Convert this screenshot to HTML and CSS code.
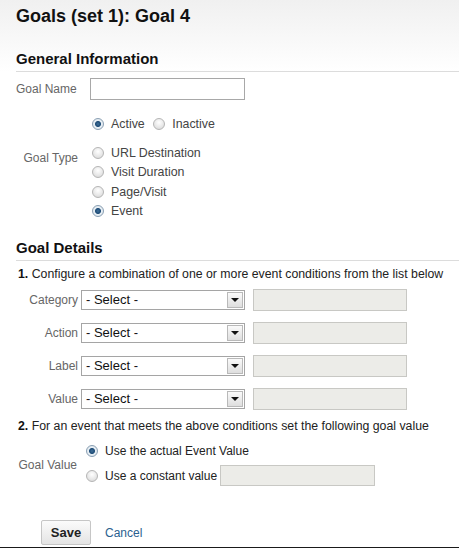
FILE: index.html
```html
<!DOCTYPE html>
<html>
<head>
<meta charset="utf-8">
<link rel="stylesheet" href="styles.css">
</head>
<body>
<div class="page">
  <h1 class="title">Goals (set 1): Goal 4</h1>
  <h2 class="section">General Information</h2>
  <div class="form">
    <div class="row name-row">
      <div class="label">Goal Name</div>
      <div class="field"><span class="textbox"></span></div>
    </div>
    <div class="row status-row">
      <div class="label"></div>
      <div class="field inline">
        <span class="opt"><span class="radio on"></span>Active</span>
        <span class="opt"><span class="radio"></span>Inactive</span>
      </div>
    </div>
    <div class="row type-row">
      <div class="label type-label">Goal Type</div>
      <div class="field stack">
        <span class="opt"><span class="radio"></span>URL Destination</span>
        <span class="opt"><span class="radio"></span>Visit Duration</span>
        <span class="opt"><span class="radio"></span>Page/Visit</span>
        <span class="opt"><span class="radio on"></span>Event</span>
      </div>
    </div>
  </div>

  <h2 class="section details">Goal Details</h2>
  <p class="step"><b>1.</b> Configure a combination of one or more event conditions from the list below</p>
  <div class="conds">
    <div class="cond">
      <span class="clabel">Category</span>
      <span class="select"><span class="sval">- Select -</span><span class="arrow"></span></span>
      <span class="disabled"></span>
    </div>
    <div class="cond">
      <span class="clabel">Action</span>
      <span class="select"><span class="sval">- Select -</span><span class="arrow"></span></span>
      <span class="disabled"></span>
    </div>
    <div class="cond">
      <span class="clabel">Label</span>
      <span class="select"><span class="sval">- Select -</span><span class="arrow"></span></span>
      <span class="disabled"></span>
    </div>
    <div class="cond">
      <span class="clabel">Value</span>
      <span class="select"><span class="sval">- Select -</span><span class="arrow"></span></span>
      <span class="disabled"></span>
    </div>
  </div>
  <p class="step step2"><b>2.</b> For an event that meets the above conditions set the following goal value</p>
  <div class="gv">
    <span class="gvlabel">Goal Value</span>
    <div class="gvopts">
      <span class="opt big"><span class="radio on"></span>Use the actual Event Value</span>
      <span class="opt big"><span class="radio"></span>Use a constant value<span class="disabled small"></span></span>
    </div>
  </div>
  <div class="actions">
    <span class="btn">Save</span>
    <span class="link">Cancel</span>
  </div>
</div>
<div class="bottom"></div>
</body>
</html>
```
FILE: styles.css
```css
html, body { margin: 0; padding: 0; }
body {
  font-family: "Liberation Sans", Arial, sans-serif;
  color: #222;
  background: linear-gradient(#f0f0f0 0, #ffffff 72px) no-repeat;
  width: 459px;
  height: 548px;
  overflow: hidden;
  position: relative;
}
.page { padding-left: 16px; height: 547px; }
.title {
  margin: 0;
  padding-top: 5px;
  font-size: 18px;
  line-height: 22px;
  font-weight: bold;
  color: #111;
}
.section {
  margin: 23px 0 0 0;
  font-size: 15px;
  line-height: 18px;
  font-weight: bold;
  color: #111;
  padding-bottom: 3px;
  border-bottom: 1px solid #dcdcdc;
}
.form { display: flex; flex-direction: column; }
.row { display: flex; }
.label {
  width: 62px;
  text-align: right;
  padding-right: 12px;
  font-size: 12px;
  color: #666;
}
.name-row { margin-top: 6px; height: 22px; align-items: center; }
.name-row .label { text-align: left; }
.name-row .field { padding-left: 0; }
.textbox {
  display: block;
  width: 153px;
  height: 20px;
  border: 1px solid #a8a8a8;
  background: #fff;
}
.status-row { margin-top: 17px; height: 16px; align-items: center; }
.opt {
  display: inline-flex;
  align-items: center;
  font-size: 12.4px;
  color: #444;
  height: 16px;
}
.inline .opt + .opt { margin-left: 4px; }
.field { padding-left: 2px; }
.radio {
  display: inline-block;
  box-sizing: border-box;
  width: 12px;
  height: 12px;
  border-radius: 50%;
  border: 1px solid #b5b5b5;
  background: radial-gradient(circle at 50% 35%, #ffffff 0, #e8e8e8 55%, #d4d4d4 100%);
  margin-right: 7px;
  position: relative;
}
.radio.on {
  border-color: #8a9fb3;
  background: radial-gradient(circle, #3f6f99 0, #1d4b76 2.5px, #e6eef4 3.5px, #dfe5ea 100%);
}
.type-row { margin-top: 12px; }
.type-label { padding-top: 6px; }
.stack { display: flex; flex-direction: column; gap: 3.4px; }
.details { margin-top: 20px; }
.step {
  margin: 6px 0 0 2px;
  font-size: 12.3px;
  line-height: 14px;
  color: #222;
}
.step b { color: #111; }
.conds { display: flex; flex-direction: column; gap: 12px; margin-top: 8px; }
.cond { display: flex; align-items: center; height: 21px; }
.clabel {
  width: 62px;
  text-align: right;
  font-size: 12px;
  color: #666;
  margin-right: 3px;
}
.select {
  box-sizing: border-box;
  width: 164px;
  height: 20px;
  border: 1px solid #a5a5a5;
  background: #fff;
  display: flex;
  align-items: center;
  justify-content: space-between;
  padding: 0 1px 0 4px;
}
.sval { font-size: 13px; color: #111; }
.arrow {
  box-sizing: border-box;
  width: 16px;
  height: 16px;
  border: 1px solid #b9b9b9;
  background: linear-gradient(#fafafa, #dedede);
  position: relative;
}
.arrow::after {
  content: "";
  position: absolute;
  left: 3px;
  top: 5px;
  border-left: 4px solid transparent;
  border-right: 4px solid transparent;
  border-top: 4px solid #111;
}
.disabled {
  box-sizing: border-box;
  display: block;
  width: 154px;
  height: 22px;
  border: 1px solid #c8c8c4;
  background: #ecece8;
  margin-left: 8px;
}
.step2 { margin-top: 10px; }
.gv { display: flex; align-items: center; margin-top: 8px; }
.gvlabel {
  width: 61px;
  text-align: right;
  font-size: 12px;
  color: #666;
  margin-right: 9px;
  padding-top: 4px;
}
.gvopts { display: flex; flex-direction: column; gap: 6px; }
.opt.big { font-size: 12px; color: #222; height: 19px; }
.disabled.small { margin-left: 3px; height: 21px; width: 155px; }
.actions { display: flex; align-items: center; margin-top: 35px; padding-left: 25px; }
.btn {
  box-sizing: border-box;
  width: 50px;
  height: 25px;
  border: 1px solid #c6c6c6;
  border-radius: 2px;
  background: linear-gradient(#fbfbfb, #e4e4e4);
  font-size: 13px;
  font-weight: bold;
  color: #222;
  display: flex;
  align-items: center;
  justify-content: center;
}
.link { margin-left: 14px; font-size: 12px; color: #2a6190; }
.bottom {
  position: absolute;
  left: 0;
  right: 0;
  bottom: 0;
  height: 1px;
  background: #1a1a1a;
}
```
